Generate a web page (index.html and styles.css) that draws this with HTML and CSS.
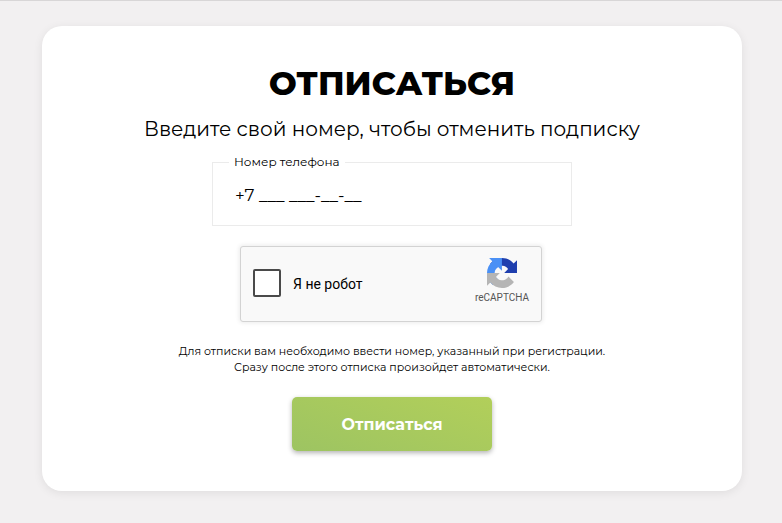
FILE: index.html
```html
<!DOCTYPE html>
<html lang="ru">
<head>
<meta charset="utf-8">
<meta name="viewport" content="width=device-width, initial-scale=1">
<title>Отписаться</title>
<link rel="stylesheet" href="styles.css">
</head>
<body>
<main class="page">
  <form class="card">
    <h1 class="title">ОТПИСАТЬСЯ</h1>
    <p class="subtitle">Введите свой номер, чтобы отменить подписку</p>
    <div class="field">
      <label class="field-label" for="phone">Номер телефона</label>
      <input class="field-input" id="phone" type="tel" value="+7 ___ ___-__-__">
    </div>
    <div class="captcha-frame">
      <div class="captcha">
        <input class="captcha-box" id="robot" type="checkbox">
        <label class="captcha-label" for="robot">Я не робот</label>
        <div class="captcha-brand">
          <svg class="captcha-logo" viewBox="0 0 64 64" aria-hidden="true">
            <path fill="#1f3fae" d="M64 31.955l-.033-1.37V4.687l-7.16 7.16C50.948 4.674 42.033.093 32.05.093c-10.4 0-19.622 4.96-25.458 12.64l11.736 11.86a15.55 15.55 0 0 1 4.754-5.334c2.05-1.6 4.952-2.906 8.968-2.906.485 0 .86.057 1.135.163 4.976.393 9.288 3.14 11.828 7.124l-8.307 8.307L64 31.953"/>
            <path fill="#4a90f5" d="M31.862.094l-1.37.033H4.594l7.16 7.16C4.58 13.147 0 22.06 0 32.046c0 10.4 4.96 19.622 12.64 25.458L24.5 45.768a15.55 15.55 0 0 1-5.334-4.754c-1.6-2.05-2.906-4.952-2.906-8.968 0-.485.057-.86.163-1.135.393-4.976 3.14-9.288 7.124-11.828l8.307 8.307L31.86.095"/>
            <path fill="#b5b5b5" d="M.001 32.045l.033 1.37v25.898l7.16-7.16c5.86 7.173 14.774 11.754 24.76 11.754 10.4 0 19.622-4.96 25.458-12.64l-11.736-11.86a15.55 15.55 0 0 1-4.754 5.334c-2.05 1.6-4.952 2.906-8.968 2.906-.485 0-.86-.057-1.135-.163-4.976-.393-9.288-3.14-11.828-7.124l8.307-8.307c-10.522.04-22.4.066-27.295-.005"/>
          </svg>
          <span class="captcha-name">reCAPTCHA</span>
        </div>
      </div>
    </div>
    <p class="note">Для отписки вам необходимо ввести номер, указанный при регистрации.<br>Сразу после этого отписка произойдет автоматически.</p>
    <button class="submit" type="submit">Отписаться</button>
  </form>
</main>
</body>
</html>
```
FILE: styles.css
```css
* {
  box-sizing: border-box;
}

body {
  margin: 0;
  background: #f2f0f1;
  color: #000;
  font-family: Montserrat, Inter, sans-serif;
}

.page {
  min-height: 100vh;
  padding: 25px 40px 32px 42px;
  border-top: 1px solid #d8d6d7;
}

.card {
  display: flex;
  flex-direction: column;
  align-items: center;
  max-width: 700px;
  margin: 0 auto;
  padding: 36px 20px 40px;
  border-radius: 20px;
  background: #fff;
  box-shadow: 0 2px 10px rgba(0, 0, 0, 0.08);
  text-align: center;
}

.title {
  margin: 0;
  font-size: 33px;
  line-height: 42px;
  font-weight: 800;
}

.subtitle {
  margin: 11px 0 19px;
  font-size: 20px;
  line-height: 28px;
  font-weight: 400;
}

.field {
  position: relative;
  width: 100%;
  max-width: 360px;
}

.field-label {
  position: absolute;
  top: -8px;
  left: 17px;
  padding: 0 5px;
  background: #fff;
  font-size: 12px;
  line-height: 16px;
}

.field-input {
  display: block;
  width: 100%;
  height: 64px;
  padding: 2px 22px 0;
  border: 1px solid #ebebeb;
  border-radius: 0;
  background: transparent;
  color: #000;
  font: 400 17px/20px Montserrat, Inter, sans-serif;
}

.captcha-frame {
  width: 304px;
  margin-top: 20px;
}

.captcha {
  display: flex;
  align-items: center;
  width: 302px;
  height: 76px;
  padding: 0 12px;
  border: 1px solid #d3d3d3;
  border-radius: 3px;
  background: #f9f9f9;
  box-shadow: 0 0 4px 1px rgba(0, 0, 0, 0.08);
  font-family: Roboto, sans-serif;
}

.captcha-box {
  appearance: none;
  width: 28px;
  height: 28px;
  margin: 0 12px 2px 0;
  border: 2px solid #4a4a4a;
  border-radius: 2px;
  background: #fff;
}

.captcha-label {
  font-size: 14px;
  line-height: 18px;
}

.captcha-brand {
  display: flex;
  flex-direction: column;
  align-items: center;
  gap: 4px;
  margin-left: auto;
  padding-bottom: 6px;
}

.captcha-logo {
  width: 30px;
  height: 30px;
}

.captcha-name {
  color: #555;
  font: 10px/12px Roboto, sans-serif;
}

.note {
  margin: 21px 0 22px;
  font-size: 11px;
  line-height: 16px;
}

.submit {
  padding: 18px 50px 16px;
  border: 0;
  border-radius: 5px;
  background: linear-gradient(20deg, #9dc462, #b2cf5a);
  box-shadow: 0 2px 5px rgba(0, 0, 0, 0.3);
  color: #fff;
  font: 700 16px/20px Montserrat, Inter, sans-serif;
}
```
